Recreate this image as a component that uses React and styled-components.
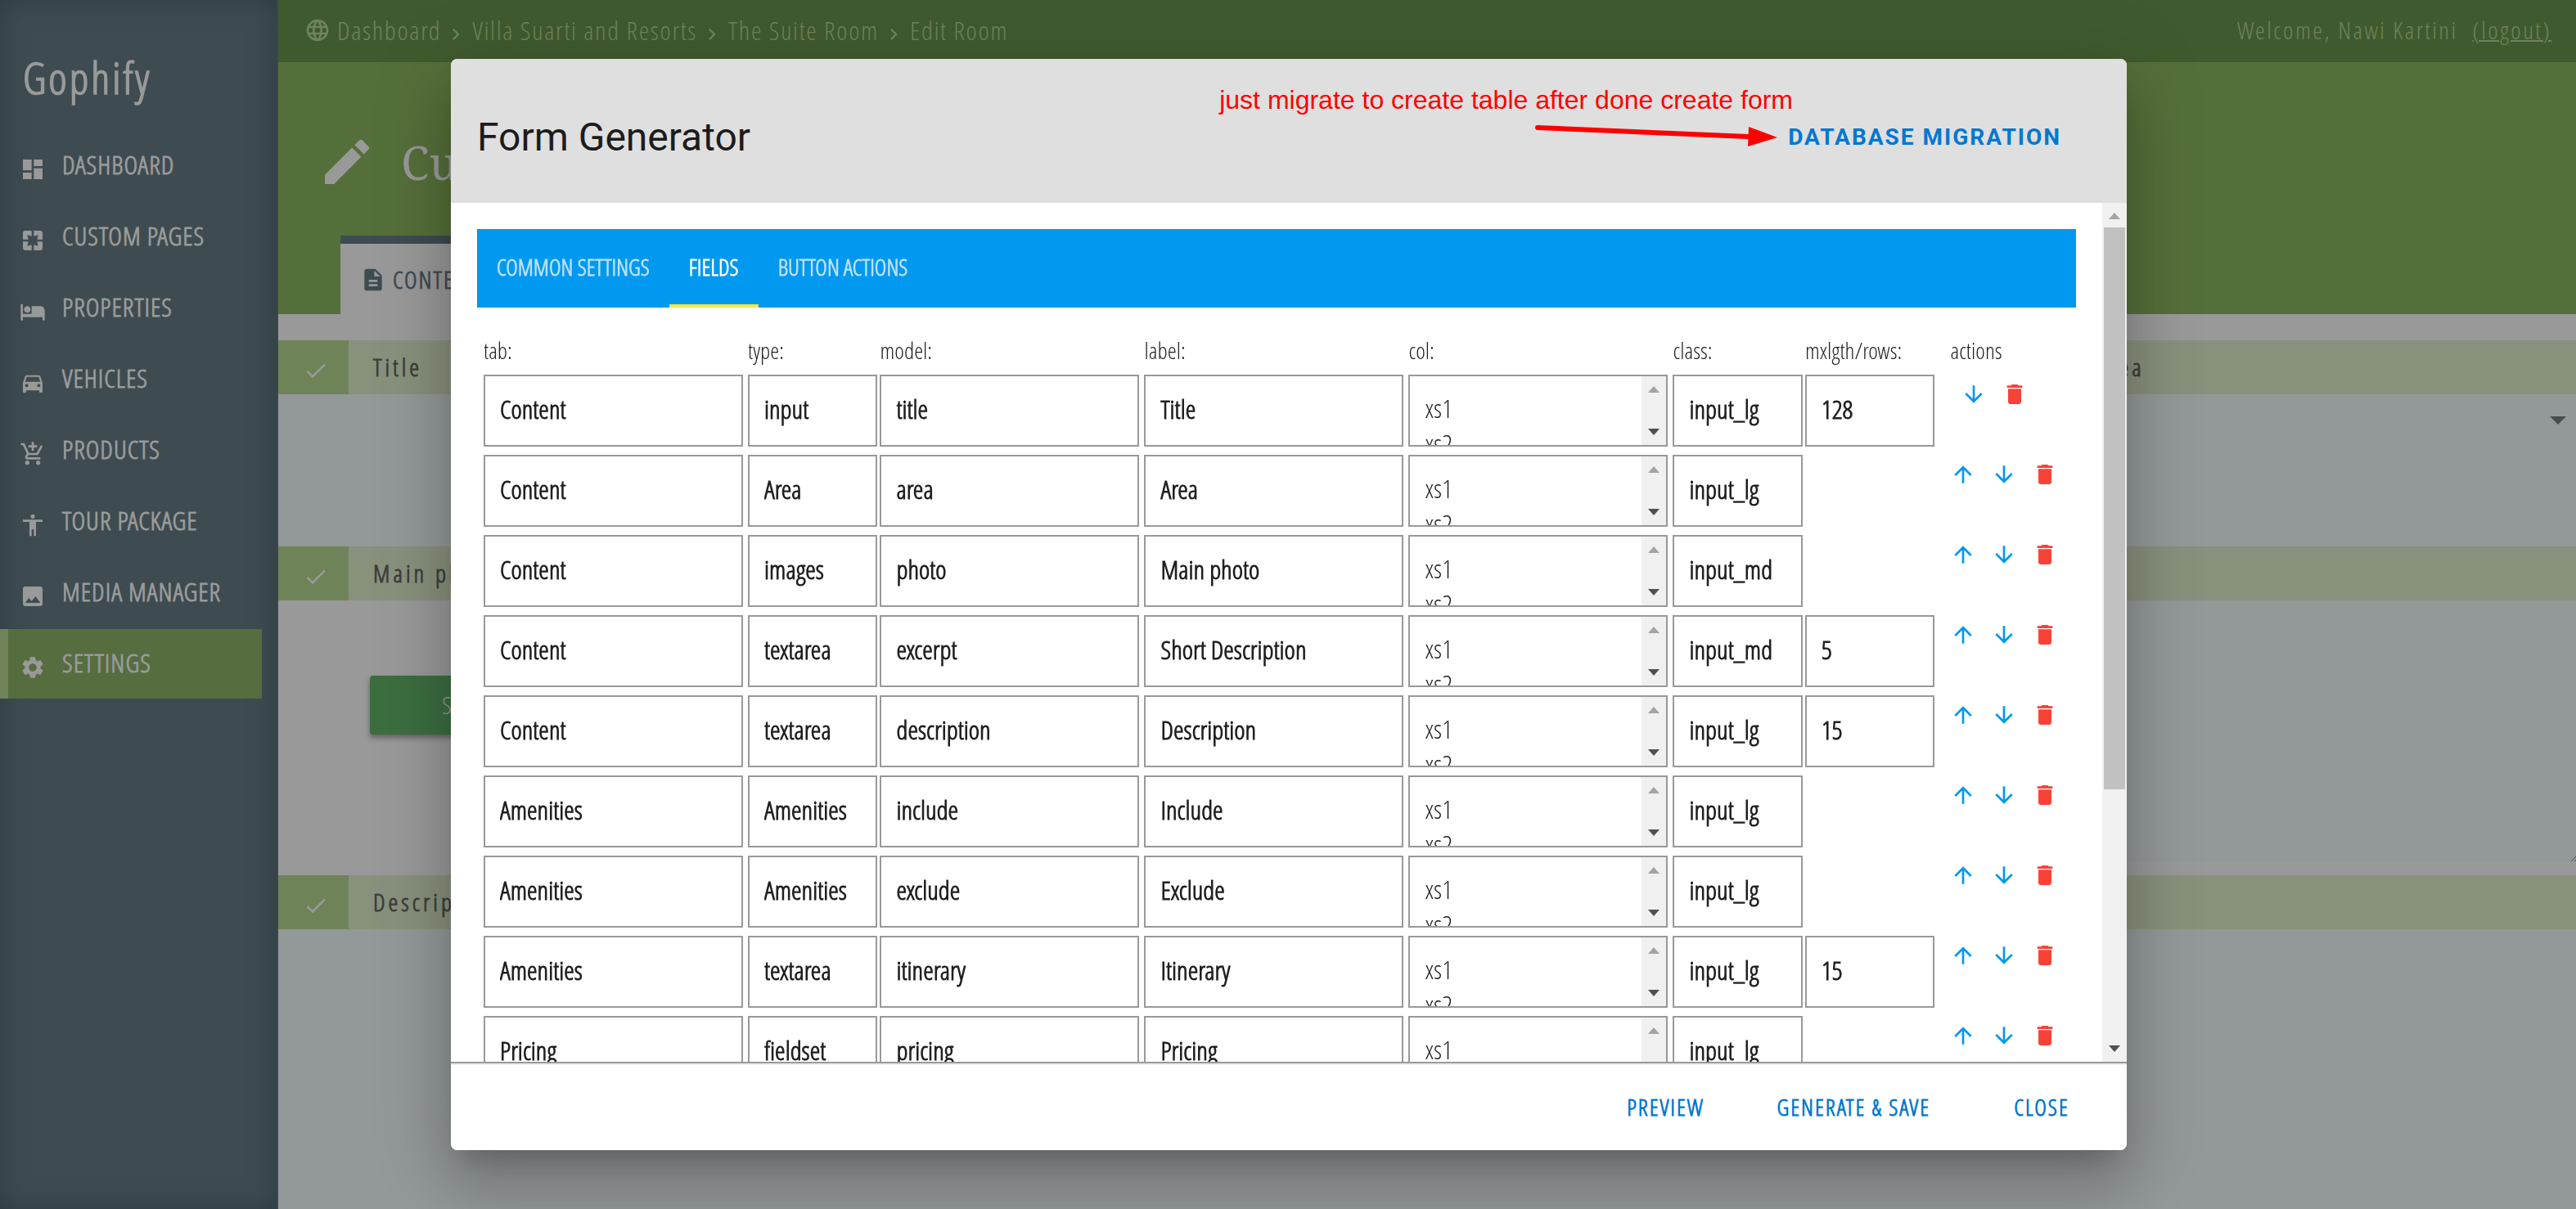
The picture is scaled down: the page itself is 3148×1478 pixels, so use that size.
import React from "react";
import styled, { createGlobalStyle, css } from "styled-components";
import {
  MdDashboard,
  MdPages,
  MdHotel,
  MdDirectionsCar,
  MdAddShoppingCart,
  MdAccessibility,
  MdImage,
  MdSettings,
  MdLanguage,
  MdChevronRight,
  MdEdit,
  MdDescription,
  MdCheck,
  MdArrowUpward,
  MdArrowDownward,
  MdDelete,
} from "react-icons/md";

const condensed = '"Open Sans Condensed Light", "Open Sans Condensed", "Open Sans", sans-serif';
const roboto = 'Roboto, "Liberation Sans", sans-serif';

const GlobalStyle = createGlobalStyle`
  *, *::before, *::after { box-sizing: border-box; }
  body { margin: 0; background: #999; font-family: ${condensed}; font-size: 28px; }
  button, input, select { font-family: inherit; margin: 0; }
  button { cursor: pointer; }
  a { color: inherit; text-decoration: none; }
`;

const Page = styled.div`
  display: flex;
  height: 100vh;
  overflow: hidden;
`;

/* ---------- sidebar ---------- */

const Sidebar = styled.aside`
  flex: none;
  width: 340px;
  background: #3e4c51;
  border-right: 2px solid #3b474e;
  box-shadow: inset 0 0 32px rgba(30, 40, 56, 0.5);
`;

const Brand = styled.h1`
  margin: 0;
  padding: 54px 28px 0;
  height: 160px;
  font-size: 54px;
  line-height: 80px;
  font-weight: 700;
  letter-spacing: 3px;
  color: #999;
`;

const Menu = styled.nav`
  display: flex;
  flex-direction: column;
  gap: 2px;
  width: 320px;
`;

const MenuLink = styled.a`
  display: flex;
  align-items: center;
  height: 85px;
  padding: 0 0 4px 14px;
  border-left: 10px solid ${(p) => (p.$active ? "#72825b" : "transparent")};
  background: ${(p) => (p.$active ? "#566d3f" : "transparent")};
  color: #999;
  font-size: 32px;
  line-height: 44px;
  font-weight: 700;
  letter-spacing: 1px;

  svg {
    flex: none;
    width: 32px;
    height: 32px;
    margin: 12px 20px 0 0;
  }
`;

/* ---------- background page ---------- */

const Main = styled.main`
  flex: 1;
  min-width: 0;
  background: #999;
`;

const TopBar = styled.header`
  display: flex;
  align-items: center;
  justify-content: space-between;
  height: 76px;
  padding: 0 30px 2px 32px;
  background: #405a2f;
  color: #6f8458;
`;

const Crumbs = styled.nav`
  display: flex;
  align-items: center;
  gap: 10px;
  font-size: 32px;
  line-height: 40px;
  letter-spacing: 0.05em;
`;

const GlobeIcon = styled(MdLanguage)`
  width: 32px;
  height: 32px;
  margin-right: -2px;
`;

const CrumbArrow = styled(MdChevronRight)`
  width: 28px;
  height: 28px;
  margin: 10px -4px 0 -6px;
`;

const Welcome = styled.p`
  display: flex;
  gap: 18px;
  margin: 0;
  font-size: 30px;
  line-height: 40px;
  letter-spacing: 0.08em;

  a { text-decoration: underline; text-decoration-thickness: 2px; }
`;

const Banner = styled.section`
  display: flex;
  flex-direction: column;
  justify-content: space-between;
  height: 308px;
  padding: 82px 76px 0 48px;
  background: #556f3a;
`;

const BannerTitle = styled.h2`
  display: flex;
  align-items: center;
  gap: 30px;
  margin: 0;
  color: #999;
  font-family: "Noto Serif", "Liberation Serif", serif;
  font-size: 56px;
  line-height: 80px;
  font-weight: 400;

  svg { width: 72px; height: 72px; }
`;

const ContentTab = styled.button`
  display: flex;
  align-items: center;
  gap: 8px;
  align-self: flex-start;
  height: 96px;
  margin-left: 28px;
  padding: 2px 40px 0 24px;
  border: 0;
  border-top: 10px solid #3e4b52;
  background: #999;
  color: #3e4c52;
  font-size: 30px;
  line-height: 40px;
  font-weight: 700;
  letter-spacing: 2px;

  svg { width: 32px; height: 32px; }
`;

const FieldGrid = styled.div`
  display: grid;
  grid-template-columns: repeat(4, 1fr);
  padding-top: 32px;
`;

const Field = styled.section`
  display: flex;
  flex-direction: column;
  min-width: 0;
  height: ${(p) => p.$height}px;
  grid-column: span ${(p) => p.$span};
`;

const FieldHead = styled.h3`
  display: flex;
  align-items: center;
  gap: 30px;
  flex: none;
  height: 66px;
  margin: 0;
  background: #88917c;
  color: #3e3e3e;
  font-size: 30px;
  line-height: 40px;
  font-weight: 700;
  letter-spacing: 4px;
`;

const CheckCell = styled.span`
  display: flex;
  align-items: center;
  justify-content: center;
  width: 86px;
  height: 66px;
  padding: 8px 0 0 6px;
  background: #6f8358;
  color: #999;

  svg { width: 32px; height: 32px; }
`;

const FieldBody = styled.div`
  display: flex;
  flex: 1;
  align-items: flex-start;
  justify-content: ${(p) => (p.$end ? "flex-end" : "flex-start")};
  padding: ${(p) => p.$pad || "0"};
  margin-bottom: ${(p) => p.$gap || 0}px;
  background: ${(p) => (p.$plain ? "#999" : "#939899")};
`;

const Caret = styled.svg`
  width: 20px;
  height: 10px;
  fill: #4b4d4d;
`;

const Grip = styled.svg`
  align-self: flex-end;
  width: 6px;
  height: 8px;
  stroke: #4b4d4d;
`;

const SelectButton = styled.button`
  height: 72px;
  min-width: 260px;
  padding: 0 88px;
  border: 0;
  border-radius: 4px;
  background: #3c6e40;
  box-shadow: 0 4px 6px rgba(0, 0, 0, 0.35);
  color: #999;
  font-size: 30px;
  line-height: 40px;
  letter-spacing: 3px;
`;

/* ---------- dialog ---------- */

const Overlay = styled.div`
  position: fixed;
  inset: 0;
  display: flex;
  padding: 72px 549px 72px 551px;
`;

const Dialog = styled.section`
  position: relative;
  display: flex;
  flex: 1;
  flex-direction: column;
  min-width: 0;
  border-radius: 8px;
  background: #fff;
  color: #212121;
  box-shadow:
    0 22px 30px -14px rgba(0, 0, 0, 0.2),
    0 48px 76px 6px rgba(0, 0, 0, 0.14),
    0 18px 92px 16px rgba(0, 0, 0, 0.12);
`;

const DialogHead = styled.header`
  display: flex;
  flex: none;
  align-items: center;
  justify-content: space-between;
  height: 176px;
  padding: 16px 80px 0 32px;
  border-radius: 8px 8px 0 0;
  background: #dfdfdf;
  font-family: ${roboto};
`;

const DialogTitle = styled.h2`
  margin: 0;
  font-size: 48px;
  line-height: 64px;
  font-weight: 400;
  color: #1c1c1c;
`;

const MigrateButton = styled.button`
  padding: 0;
  border: 0;
  background: none;
  color: #0078d0;
  font-family: ${roboto};
  font-size: 28px;
  line-height: 40px;
  font-weight: 700;
  letter-spacing: 2px;
`;

const Note = styled.p`
  position: absolute;
  top: 30px;
  right: 408px;
  margin: 0;
  color: #f00;
  font-family: "Liberation Sans", Arial, sans-serif;
  font-size: 32px;
  line-height: 40px;
  white-space: nowrap;
`;

const NoteArrow = styled.svg`
  position: absolute;
  top: 76px;
  right: 427px;
  width: 300px;
  height: 40px;
`;

const DialogBody = styled.div`
  display: flex;
  flex: 1;
  min-height: 0;
`;

const Scroller = styled.div`
  flex: 1;
  min-width: 0;
  overflow: hidden;
  padding: 32px;
`;

const Tabs = styled.div`
  display: flex;
  height: 96px;
  background: #0099ef;
`;

const Tab = styled.button`
  height: 96px;
  padding: 0 24px;
  border: 0;
  border-bottom: 4px solid ${(p) => (p.$active ? "#ffe54a" : "transparent")};
  background: none;
  color: ${(p) => (p.$active ? "#fff" : "#b8e0fa")};
  font-size: 28px;
  line-height: 40px;
  font-weight: 700;
`;

const FieldTable = styled.table`
  width: 100%;
  margin-top: 32px;
  padding: 0 8px;
  table-layout: fixed;
  border-collapse: separate;
  border-spacing: 0;
`;

const Th = styled.th`
  width: ${(p) => (p.$span * 100) / 12}%;
  height: 50px;
  padding: 0 0 10px ${(p) => (p.$indent ? 16 : 0)}px;
  text-align: left;
  font-size: 28px;
  line-height: 40px;
  font-weight: 400;
`;

const Td = styled.td`
  height: 98px;
  padding: 0 ${(p) => (p.$wide ? 6 : 3)}px 10px 0;
  vertical-align: top;
`;

const box = css`
  width: 100%;
  height: 88px;
  border: 2px solid #999;
  border-radius: 0;
  background: #fff;
`;

const TextBox = styled.input`
  ${box}
  display: block;
  padding: 0 18px 6px;
  color: #212121;
  font-size: 32px;
  line-height: 44px;
  font-weight: 700;
  outline: 0;
`;

const ListBox = styled.div`
  ${box}
  display: flex;
`;

const List = styled.select`
  flex: 1;
  min-width: 0;
  height: 84px;
  padding: 17px 18px 0;
  border: 0;
  outline: 0;
  overflow: hidden;
  background: #fff;
  color: #212121;
  font-size: 32px;

  option {
    min-height: 43px;
    padding: 0;
    line-height: 43px;
  }
`;

const Track = styled.div`
  display: flex;
  flex: none;
  flex-direction: column;
  align-items: center;
  justify-content: space-between;
  width: 30px;
  padding: 12px 0;
  background: #f0f0f0;
`;

const Thumb = styled.div`
  width: 26px;
  height: ${(p) => p.$size}%;
  margin: 10px 0 auto;
  background: #c1c1c1;
`;

const Triangle = styled.svg`
  flex: none;
  width: 14px;
  height: 8px;
  fill: ${(p) => (p.$dim ? "#a3a3a3" : "#505050")};
`;

const Actions = styled.div`
  display: flex;
  justify-content: center;
  gap: 18px;
  padding: 8px ${(p) => (p.$first ? 25 : 0)}px 0 5px;
`;

const IconButton = styled.button`
  display: flex;
  padding: 0;
  border: 0;
  background: none;
  color: ${(p) => (p.$danger ? "#f84238" : "#0099f2")};

  svg { width: 32px; height: 32px; }
`;

const DialogFoot = styled.footer`
  display: flex;
  flex: none;
  align-items: center;
  justify-content: flex-end;
  gap: 16px;
  height: 108px;
  padding: 0 16px;
  border-top: 2px solid #999;
  border-radius: 0 0 8px 8px;
  box-shadow: inset 0 2px 0 #eee;
  background: #fff;
`;

const FootButton = styled.button`
  min-width: 176px;
  height: 72px;
  padding: 0 32px;
  border: 0;
  background: none;
  color: #0078d0;
  font-size: 28px;
  line-height: 40px;
  font-weight: 700;
  letter-spacing: 2px;
`;

const menu = [
  ["DASHBOARD", MdDashboard],
  ["CUSTOM PAGES", MdPages],
  ["PROPERTIES", MdHotel],
  ["VEHICLES", MdDirectionsCar],
  ["PRODUCTS", MdAddShoppingCart],
  ["TOUR PACKAGE", MdAccessibility],
  ["MEDIA MANAGER", MdImage],
  ["SETTINGS", MdSettings],
];

const columns = [
  ["tab:", 2],
  ["type:", 1],
  ["model:", 2],
  ["label:", 2],
  ["col:", 2],
  ["class:", 1],
  ["mxlgth/rows:", 1],
  ["actions", 1],
];

const fields = [
  ["Content", "input", "title", "Title", "input_lg", "128"],
  ["Content", "Area", "area", "Area", "input_lg", ""],
  ["Content", "images", "photo", "Main photo", "input_md", ""],
  ["Content", "textarea", "excerpt", "Short Description", "input_md", "5"],
  ["Content", "textarea", "description", "Description", "input_lg", "15"],
  ["Amenities", "Amenities", "include", "Include", "input_lg", ""],
  ["Amenities", "Amenities", "exclude", "Exclude", "input_lg", ""],
  ["Amenities", "textarea", "itinerary", "Itinerary", "input_lg", "15"],
  ["Pricing", "fieldset", "pricing", "Pricing", "input_lg", ""],
];

const Up = () => (
  <Triangle $dim viewBox="0 0 14 8" aria-hidden="true"><path d="M7 0l7 8H0z" /></Triangle>
);
const Down = () => (
  <Triangle viewBox="0 0 14 8" aria-hidden="true"><path d="M0 0h14L7 8z" /></Triangle>
);

function FieldRow({ field, first }) {
  const [tab, type, model, label, cls, rows] = field;
  return (
    <tr>
      <Td $wide><TextBox aria-label={`${model} tab`} defaultValue={tab} /></Td>
      <Td><TextBox aria-label={`${model} type`} defaultValue={type} /></Td>
      <Td $wide><TextBox aria-label={`${model} model`} defaultValue={model} /></Td>
      <Td $wide><TextBox aria-label={`${model} label`} defaultValue={label} /></Td>
      <Td $wide>
        <ListBox>
          <List multiple size={2} aria-label={`${model} col`}>
            <option>xs1</option>
            <option>xs2</option>
          </List>
          <Track><Up /><Down /></Track>
        </ListBox>
      </Td>
      <Td><TextBox aria-label={`${model} class`} defaultValue={cls} /></Td>
      <Td>{rows && <TextBox aria-label={`${model} length or rows`} defaultValue={rows} />}</Td>
      <Td>
        <Actions $first={first}>
          {!first && <IconButton aria-label="Move up"><MdArrowUpward /></IconButton>}
          <IconButton aria-label="Move down"><MdArrowDownward /></IconButton>
          <IconButton $danger aria-label="Delete"><MdDelete /></IconButton>
        </Actions>
      </Td>
    </tr>
  );
}

const Head = ({ children }) => (
  <FieldHead><CheckCell><MdCheck /></CheckCell>{children}</FieldHead>
);

export default function App() {
  return (
    <>
      <GlobalStyle />
      <Page>
        <Sidebar>
          <Brand>Gophify</Brand>
          <Menu>
            {menu.map(([name, Icon]) => (
              <MenuLink key={name} href="#" $active={name === "SETTINGS"}>
                <Icon />{name}
              </MenuLink>
            ))}
          </Menu>
        </Sidebar>
        <Main>
          <TopBar>
            <Crumbs>
              <GlobeIcon />
              <a href="#">Dashboard</a>
              <CrumbArrow />
              <a href="#">Villa Suarti and Resorts</a>
              <CrumbArrow />
              <a href="#">The Suite Room</a>
              <CrumbArrow />
              <a href="#">Edit Room</a>
            </Crumbs>
            <Welcome>Welcome, Nawi Kartini <a href="#">(logout)</a></Welcome>
          </TopBar>
          <Banner>
            <BannerTitle><MdEdit />Custom Page</BannerTitle>
            <ContentTab><MdDescription />CONTENT</ContentTab>
          </Banner>
          <FieldGrid>
            <Field $span={3} $height={252}>
              <Head>Title</Head>
              <FieldBody />
            </Field>
            <Field $span={1} $height={252}>
              <Head>Area</Head>
              <FieldBody $end $pad="27px 12px 0">
                <Caret viewBox="0 0 20 10"><path d="M0 0h20L10 10z" /></Caret>
              </FieldBody>
            </Field>
            <Field $span={2} $height={402}>
              <Head>Main photo</Head>
              <FieldBody $plain $pad="92px 112px">
                <SelectButton>SELECT</SelectButton>
              </FieldBody>
            </Field>
            <Field $span={2} $height={402}>
              <Head>Short Description</Head>
              <FieldBody $end $gap={16}>
                <Grip viewBox="0 0 6 8"><path d="M0 7L6 1M4 7l2-2" /></Grip>
              </FieldBody>
            </Field>
            <Field $span={4} $height={408}>
              <Head>Description</Head>
              <FieldBody />
            </Field>
          </FieldGrid>
        </Main>
      </Page>

      <Overlay>
        <Dialog role="dialog" aria-label="Form Generator">
          <DialogHead>
            <DialogTitle>Form Generator</DialogTitle>
            <MigrateButton>DATABASE MIGRATION</MigrateButton>
          </DialogHead>
          <DialogBody>
            <Scroller>
              <Tabs role="tablist">
                <Tab role="tab">COMMON SETTINGS</Tab>
                <Tab role="tab" $active>FIELDS</Tab>
                <Tab role="tab">BUTTON ACTIONS</Tab>
              </Tabs>
              <FieldTable>
                <thead>
                  <tr>
                    {columns.map(([name, span]) => (
                      <Th key={name} $span={span} $indent={name === "actions"}>{name}</Th>
                    ))}
                  </tr>
                </thead>
                <tbody>
                  {fields.map((f, i) => <FieldRow key={f[2]} field={f} first={i === 0} />)}
                </tbody>
              </FieldTable>
            </Scroller>
            <Track>
              <Up />
              <Thumb $size={67} />
              <Down />
            </Track>
          </DialogBody>
          <DialogFoot>
            <FootButton>PREVIEW</FootButton>
            <FootButton>GENERATE &amp; SAVE</FootButton>
            <FootButton>CLOSE</FootButton>
          </DialogFoot>
          <Note>just migrate to create table after done create form</Note>
          <NoteArrow viewBox="0 0 300 40" aria-hidden="true">
            <path d="M7 8L264 19" stroke="#f00" strokeWidth="6" strokeLinecap="round" />
            <path d="M265 7L300 20L264 31z" fill="#f00" />
          </NoteArrow>
        </Dialog>
      </Overlay>
    </>
  );
}
